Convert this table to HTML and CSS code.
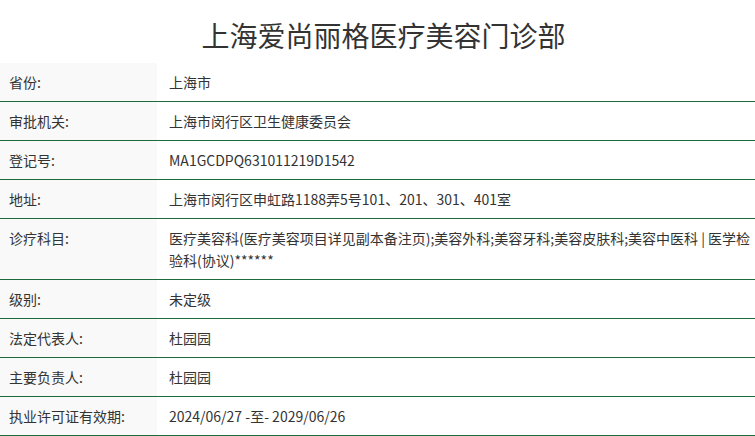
FILE: index.html
```html
<!DOCTYPE html>
<html lang="zh-CN">
<head>
    <meta charset="UTF-8">
    <meta name="viewport" content="width=device-width, initial-scale=1.0">
    <title>上海爱尚丽格医疗美容门诊部</title>
    <link rel="stylesheet" href="styles.css">
</head>
<body>
    <div class="page">
        <h1 class="title">上海爱尚丽格医疗美容门诊部</h1>

        <table class="info-table">
            <tr>
                <th>省份:</th>
                <td>上海市</td>
            </tr>
            <tr>
                <th>审批机关:</th>
                <td>上海市闵行区卫生健康委员会</td>
            </tr>
            <tr>
                <th>登记号:</th>
                <td>MA1GCDPQ631011219D1542</td>
            </tr>
            <tr>
                <th>地址:</th>
                <td>上海市闵行区申虹路1188弄5号101、201、301、401室</td>
            </tr>
            <tr>
                <th>诊疗科目:</th>
                <td>医疗美容科(医疗美容项目详见副本备注页);美容外科;美容牙科;美容皮肤科;美容中医科 | 医学检验科(协议)******</td>
            </tr>
            <tr>
                <th>级别:</th>
                <td>未定级</td>
            </tr>
            <tr>
                <th>法定代表人:</th>
                <td>杜园园</td>
            </tr>
            <tr>
                <th>主要负责人:</th>
                <td>杜园园</td>
            </tr>
            <tr>
                <th>执业许可证有效期:</th>
                <td>2024/06/27 -至- 2029/06/26</td>
            </tr>
        </table>
    </div>
</body>
</html>
```

FILE: styles.css
```css
/* General Reset */
html, body {
    margin: 0;
    padding: 0;
    background: #fff;
    color: #333;
    font-family: 'Noto Sans CJK SC', 'Noto Sans', sans-serif;
}

.page {
    width: 100%;
}

/* Title */
.title {
    margin: 14px 0 7px;
    padding-left: 12px;
    font-size: 28px;
    line-height: 42px;
    font-weight: normal;
    text-align: center;
    color: #333;
}

/* Info table */
.info-table {
    width: 100%;
    border-collapse: collapse;
    font-size: 14px;
    line-height: 22px;
}

.info-table tr {
    border-bottom: 1px solid #1d6a3c;
}

.info-table th,
.info-table td {
    padding: 8px 0;
    vertical-align: top;
    text-align: left;
    font-weight: normal;
}

.info-table th {
    width: 148px;
    padding-left: 9px;
    background: #f9f9f9;
}

.info-table td {
    padding-left: 12px;
    padding-right: 0;
}
```
